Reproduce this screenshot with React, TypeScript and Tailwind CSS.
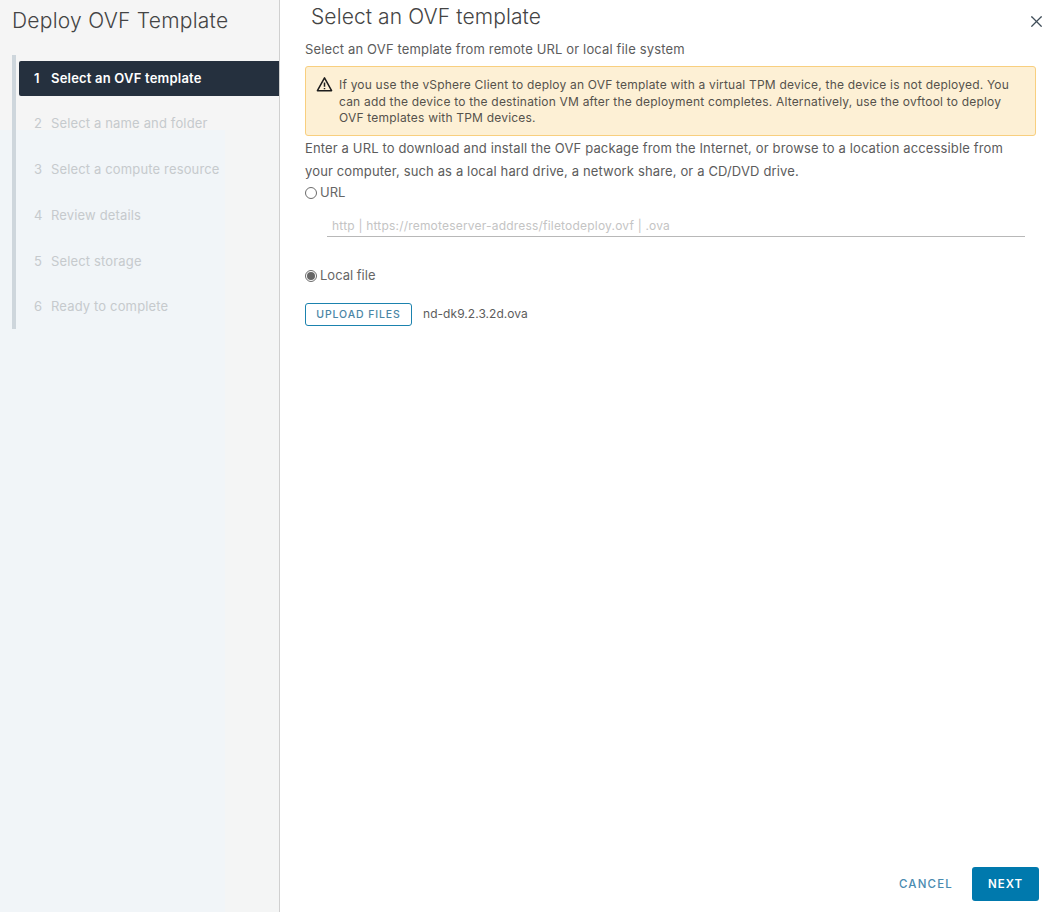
import { X } from 'lucide-react'

const steps = [
  'Select an OVF template',
  'Select a name and folder',
  'Select a compute resource',
  'Review details',
  'Select storage',
  'Ready to complete',
]

export default function App() {
  return (
    <div className="flex h-[912px] w-[1051px] overflow-hidden bg-white font-['Inter',sans-serif] text-[#5c5c5c]">
      {/* Wizard steps */}
      <aside className="w-[280px] shrink-0 border-r border-[#d0d0d0] bg-[linear-gradient(180deg,#f5f5f5_130px,transparent_130px),linear-gradient(90deg,#f1f5f8_225px,#f4f5f5_225px)]">
        <h1 className="pl-3 pt-[6px] text-[21px] leading-[30px] font-light tracking-[0.25px] text-[#444]">Deploy OVF Template</h1>
        <div className="mt-[19px] ml-3 border-l-[4px] border-[#ced6dc] pt-[6px] pb-[5px]">
          {steps.map((step, i) => (
            <div
              key={step}
              className={
                i === 0
                  ? 'ml-[3px] flex h-[35px] items-center rounded-l-[2px] bg-[#25303e] pl-[15px] text-[13px] font-semibold tracking-[0.2px] text-white'
                  : 'ml-[3px] mt-[10.7px] flex h-[35px] items-center pl-[15px] text-[13px] tracking-[0.15px] text-[#c6cacd]'
              }
            >
              <span className="w-[17px]">{i + 1}</span>
              <span>{step}</span>
            </div>
          ))}
        </div>
      </aside>

      {/* Main panel */}
      <main className="flex min-w-0 flex-1 flex-col pl-[25px] pr-[12px]">
        <div className="flex items-start justify-between">
          <h2 className="pl-[6px] pt-[3px] text-[21px] leading-[28px] font-light tracking-[0.1px] text-[#444]">Select an OVF template</h2>
          <button className="mt-[12px] -mr-[7px] text-[#3f4d58]">
            <X size={19} strokeWidth={1.5} />
          </button>
        </div>
        <p className="mt-[8px] text-[13px] leading-[20px] tracking-[0.15px]">Select an OVF template from remote URL or local file system</p>

        <div className="mt-[7px] flex w-[731px] gap-[6px] rounded-[3px] border border-[#f8cf7f] bg-[#fdf0d5] pt-[10px] pb-[8px] pl-[10px] pr-[24px]">
          <svg viewBox="0 0 18 18" className="-mt-px h-[17px] w-[17px] shrink-0" fill="none" stroke="#1c1c1c" strokeWidth="1.6">
            <path d="M9 2 L16.5 15.5 H1.5 Z" strokeLinejoin="round" />
            <path d="M9 7 V11.5 M9 12.6 V14" />
          </svg>
          <p className="text-[12px] leading-[16.5px] tracking-[0.2px] text-[#55524c]">
            If you use the vSphere Client to deploy an OVF template with a virtual TPM device, the device is not deployed. You can add the device to the destination VM after the deployment completes. Alternatively, use the ovftool to deploy OVF templates with TPM devices.
          </p>
        </div>

        <p className="mt-[1px] w-[705px] text-[13px] leading-[23px] tracking-[0.14px]">
          Enter a URL to download and install the OVF package from the Internet, or browse to a location accessible from your computer, such as a local hard drive, a network share, or a CD/DVD drive.
        </p>

        <label className="flex h-[20px] items-center text-[13px] text-[#666]">
          <span className="mr-[3px] h-[12px] w-[12px] rounded-full border border-[#6b6b6b]" />
          URL
        </label>

        <div className="mt-[14px] ml-[22px] flex h-[20px] w-[698px] items-center border-b border-[#b8b8b8] pl-[5px] text-[12px] tracking-[0.2px] text-[#c4c4c4]">
          http | https://remoteserver-address/filetodeploy.ovf | .ova
        </div>

        <label className="mt-[29px] flex h-[20px] items-center text-[13px] text-[#666]">
          <span className="mr-[3px] flex h-[12px] w-[12px] items-center justify-center rounded-full border border-[#6b6b6b]">
            <span className="h-[8px] w-[8px] rounded-full bg-[#666]" />
          </span>
          Local file
        </label>

        <div className="mt-[17px] flex items-center">
          <button className="h-[23px] w-[107px] rounded-[3px] border border-[#1b82ae] pt-px text-[10.5px] font-medium tracking-[0.9px] text-[#4a85a5]">
            UPLOAD FILES
          </button>
          <span className="ml-[11px] text-[12px] tracking-[0.05px]">nd-dk9.2.3.2d.ova</span>
        </div>

        <div className="mt-auto mb-[11px] flex items-center justify-end">
          <button className="mr-[19px] pt-[2px] text-[11.5px] font-medium tracking-[1.2px] text-[#4a8bb0]">CANCEL</button>
          <button className="h-[34px] w-[67px] rounded-[3px] bg-[#0079ad] pt-[2px] text-[11.5px] font-semibold tracking-[1px] text-white">NEXT</button>
        </div>
      </main>
    </div>
  )
}
